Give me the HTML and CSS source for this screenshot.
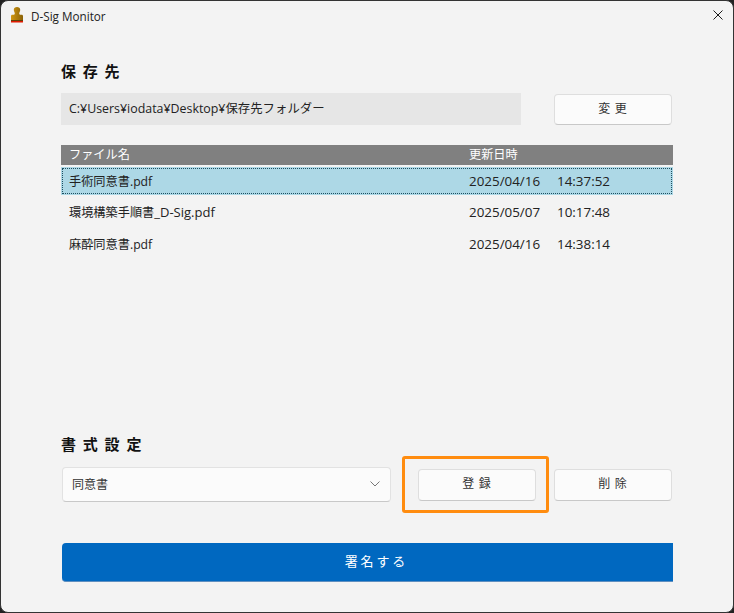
FILE: index.html
```html
<!DOCTYPE html>
<html lang="ja">
<head>
<meta charset="utf-8">
<title>D-Sig Monitor</title>
<link rel="stylesheet" href="styles.css">
</head>
<body>
<div class="window">
  <header class="titlebar">
    <svg class="app-icon" width="12" height="16" viewBox="0 0 12 16" aria-hidden="true">
      <defs><linearGradient id="stamp" x1="0" y1="0" x2="1" y2="0"><stop offset="0" stop-color="#d0960f"/><stop offset="1" stop-color="#8a6208"/></linearGradient></defs>
      <path d="M2.800 2.800C2.800 1 4.200 0 6 0s3.200 1 3.200 2.800c0 1.700-1 2.600-1 3.700 0 .6.300 1 .8 1.300h1.700c.8 0 1.300.6 1.300 1.300V13H0V9.100c0-.7.500-1.300 1.300-1.300H3c.5-.3.800-.7.800-1.300 0-1.100-1-2-1-3.700z" fill="url(#stamp)"/>
      <rect x="0" y="13" width="12" height="1" fill="#5e4106"/>
      <rect x="0" y="14" width="12" height="1.500" fill="#e01a00"/>
    </svg>
    <span class="title">D-Sig Monitor</span>
    <svg class="close" width="10" height="10" viewBox="0 0 10 10" aria-hidden="true"><path d="M.5.500l9 9M9.500.500l-9 9" stroke="#1a1a1a" stroke-width="1" fill="none"/></svg>
  </header>

  <main class="content">
    <h2 class="heading">保 存 先</h2>
    <div class="path-row">
      <div class="path">C:¥Users¥iodata¥Desktop¥保存先フォルダー</div>
      <button class="btn">変 更</button>
    </div>

    <div class="table">
      <div class="row head"><span class="c-name">ファイル名</span><span class="c-date">更新日時</span></div>
      <div class="row selected"><span class="c-name">手術同意書.pdf</span><span class="c-date num">2025/04/16</span><span class="c-time num">14:37:52</span></div>
      <div class="row"><span class="c-name">環境構築手順書<span class="latin">_D-Sig.pdf</span></span><span class="c-date num">2025/05/07</span><span class="c-time num">10:17:48</span></div>
      <div class="row"><span class="c-name">麻酔同意書.pdf</span><span class="c-date num">2025/04/16</span><span class="c-time num">14:38:14</span></div>
    </div>

    <h2 class="heading">書 式 設 定</h2>
    <div class="format-row">
      <div class="select">
        <span>同意書</span>
        <svg width="10" height="6" viewBox="0 0 10 6" aria-hidden="true"><path d="M.5.500L5 5 9.500.500" stroke="#777" stroke-width="1" fill="none"/></svg>
      </div>
      <div class="highlight"><button class="btn">登 録</button></div>
      <button class="btn">削 除</button>
    </div>

    <button class="sign">署 名 す る</button>
  </main>
</div>
</body>
</html>
```

FILE: styles.css
```css
* { box-sizing: border-box; }
html, body { margin: 0; padding: 0; background: #222; }
body { width: 734px; height: 613px; font-family: "Open Sans", "Noto Sans CJK JP", sans-serif; color: #1a1a1a; overflow: hidden; }

.window {
  width: 734px;
  height: 613px;
  background: #f3f3f3;
  border: 1px solid #333;
  border-radius: 8px;
  display: flex;
  flex-direction: column;
}

.titlebar {
  height: 30px;
  flex: none;
  display: flex;
  align-items: center;
  padding: 0 10px 0 10px;
}
.app-icon { flex: none; margin-top: -2px; }
.title { margin-left: 8px; font-size: 11.700px; color: #222; font-family: "Open Sans", sans-serif; }
.close { margin-left: auto; margin-top: -2px; }

.content {
  flex: 1;
  padding: 29px 60px 0 60px;
  display: flex;
  flex-direction: column;
}

.heading {
  margin: 0;
  font-family: "Noto Sans CJK JP", sans-serif;
  font-size: 15px;
  font-weight: 700;
  line-height: 22px;
  letter-spacing: 1.700px;
  color: #111;
}

.path-row { display: flex; align-items: flex-start; margin-top: 11px; height: 32px; }
.path {
  width: 460px;
  height: 32px;
  background: #e6e6e6;
  font-size: 12.400px;
  line-height: 32px;
  padding-left: 8px;
  color: #222;
}

.btn {
  width: 118px;
  height: 31px;
  flex: none;
  background: #fbfbfb;
  border: 1px solid #dedede;
  border-bottom-color: #c8c8c8;
  border-radius: 4px;
  font-family: "Noto Sans CJK JP", sans-serif;
  font-size: 12px;
  letter-spacing: 1px;
  color: #333;
  padding: 0 0 4px 0;
}
.path-row .btn { margin: 1px 0 0 33px; }
.format-row .btn { height: 32px; }

.table { margin-top: 20px; height: 288px; width: 612px; font-size: 12.200px; }
.row { display: flex; align-items: center; height: 32px; padding: 0 0 1px 8px; color: #222; }
.row.head { height: 20px; padding-bottom: 2px; background: #808080; color: #fff; }
.row.selected {
  height: 28px;
  margin-top: 2px;
  margin-bottom: 1px;
  background: #add8e6;
  outline: 1px dotted #1f4f60;
  outline-offset: -2px;
}
.c-name { width: 400px; flex: none; }
.c-date { width: 88px; flex: none; }
.num { font-size: 13.400px; }
.latin { font-size: 13px; }

.format-row { display: flex; align-items: center; margin-top: 1px; height: 57px; }
.select {
  width: 329px;
  height: 35px;
  margin-left: 1px;
  background: #fbfbfb;
  border: 1px solid #e2e2e2;
  border-bottom-color: #c8c8c8;
  border-radius: 4px;
  display: flex;
  align-items: center;
  justify-content: space-between;
  padding: 0 10px 2px 9px;
  font-size: 12px;
  color: #333;
  font-family: "Noto Sans CJK JP", sans-serif;
}
.highlight {
  width: 147px;
  height: 57px;
  margin-left: 11px;
  margin-right: 5px;
  padding-left: 3px;
  border: 3px solid #ff8c0f;
  border-radius: 3px;
  display: flex;
  align-items: center;
  justify-content: center;
}

.sign {
  width: 611px;
  height: 39px;
  margin: 30px 0 0 1px;
  background: #0068c0;
  border: 0;
  border-bottom: 1px solid #5f8fc0;
  border-radius: 4px 0 0 4px;
  color: #fff;
  font-family: "Noto Sans CJK JP", sans-serif;
  font-size: 13px;
  padding: 0 0 4px 15px;
}
```
